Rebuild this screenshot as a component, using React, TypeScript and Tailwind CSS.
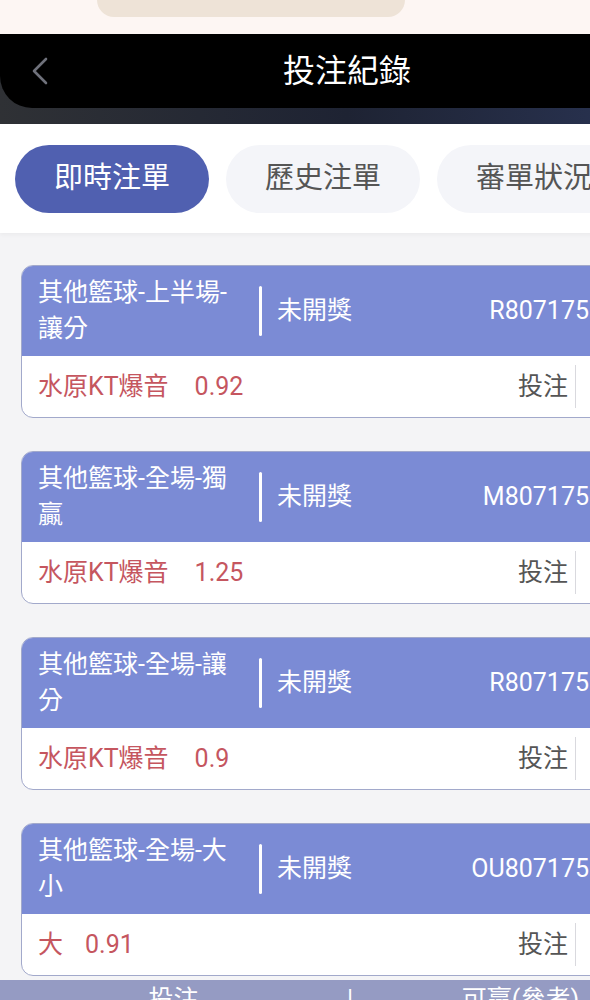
import React from "react";

type Bet = {
  title: string;
  id: string;
  pick: string;
  odds: string;
  gap: string;
};

const bets: Bet[] = [
  { title: "其他籃球-上半場-讓分", id: "R807175", pick: "水原KT爆音", odds: "0.92", gap: "ml-[26px]" },
  { title: "其他籃球-全場-獨贏", id: "M807175", pick: "水原KT爆音", odds: "1.25", gap: "ml-[26px]" },
  { title: "其他籃球-全場-讓分", id: "R807175", pick: "水原KT爆音", odds: "0.9", gap: "ml-[26px]" },
  { title: "其他籃球-全場-大小", id: "OU807175", pick: "大", odds: "0.91", gap: "ml-[22px]" },
];

const font = { fontFamily: "Roboto, 'Noto Sans CJK TC', 'Noto Sans', sans-serif" };

function Card({ bet }: { bet: Bet }) {
  return (
    <div className="w-[652px] rounded-[12px] border-[1.5px] border-[#a2a9cb] bg-white overflow-hidden">
      <div className="h-[90px] bg-[#7b8bd5] flex items-center pl-[16px] pr-[83px] text-white text-[25px]">
        <div className="w-[221px] shrink-0">
          <div className="w-[202px] leading-[36px]">{bet.title}</div>
        </div>
        <div className="w-[3px] h-[50px] bg-white rounded-full shrink-0" />
        <div className="ml-[15px] flex-1 leading-[36px]">未開獎</div>
        <div className="leading-[36px] whitespace-nowrap">{bet.id}</div>
      </div>
      <div className="h-[61px] flex items-center pl-[16px] text-[25px]">
        <div className="flex-1 text-[#c5565f] whitespace-nowrap">
          <span>{bet.pick}</span>
          <span className={bet.gap}>{bet.odds}</span>
        </div>
        <div className="text-[#555] leading-[36px]">投注</div>
        <div className="ml-[7px] w-[1px] h-[43px] bg-[#d9d9de]" />
        <div className="w-[96px]" />
      </div>
    </div>
  );
}

export default function App() {
  return (
    <div className="w-[590px] h-[1000px] overflow-hidden relative bg-[#f4f4f6]" style={font}>
      <div className="w-[694px]">
        <div className="h-[34px] bg-[#fdf6f3]">
          <div className="ml-[97px] w-[308px] h-[17px] bg-[#eee3d7] rounded-b-[18px]" />
        </div>
        <div className="h-[90px] bg-linear-to-r from-[#2f3135] via-[#1e2333] to-[#2b3658]">
          <div className="h-[74px] bg-black rounded-b-[32px] flex items-center">
            <div className="w-[80px] pl-[31px] flex items-center">
              <svg width="17" height="28" viewBox="0 0 17 28" fill="none">
                <polyline points="15,2 3,14 15,26" stroke="#6f717b" strokeWidth="2.6" strokeLinecap="round" strokeLinejoin="round" />
              </svg>
            </div>
            <div className="flex-1 text-center text-white text-[32px] leading-[40px]">投注紀錄</div>
            <div className="w-[80px]" />
          </div>
        </div>
        <div className="h-[109px] bg-white pt-[21px] px-[15px] flex gap-[17px] shadow-[0_2px_4px_rgba(0,0,0,0.04)] relative">
          <div className="w-[194px] h-[68px] rounded-full bg-[#5060b0] text-white text-[29px] flex items-center justify-center">即時注單</div>
          <div className="w-[194px] h-[68px] rounded-full bg-[#f4f5f9] text-[#555] text-[29px] flex items-center justify-center">歷史注單</div>
          <div className="w-[194px] h-[68px] rounded-full bg-[#f4f5f9] text-[#555] text-[29px] flex items-center justify-center">審單狀況</div>
        </div>
        <div className="pt-[32px] px-[21px] flex flex-col gap-[33px]">
          {bets.map((b, i) => (
            <Card key={i} bet={b} />
          ))}
        </div>
      </div>
      <div className="absolute left-0 top-[980px] w-[694px] h-[60px] bg-[#959bc3] flex text-white text-[25px] leading-[30px] pt-[5px]">
        <div className="w-[347px] text-center">投注</div>
        <div className="w-0 text-center">|</div>
        <div className="w-[347px] text-center">可贏(參考)</div>
      </div>
    </div>
  );
}
